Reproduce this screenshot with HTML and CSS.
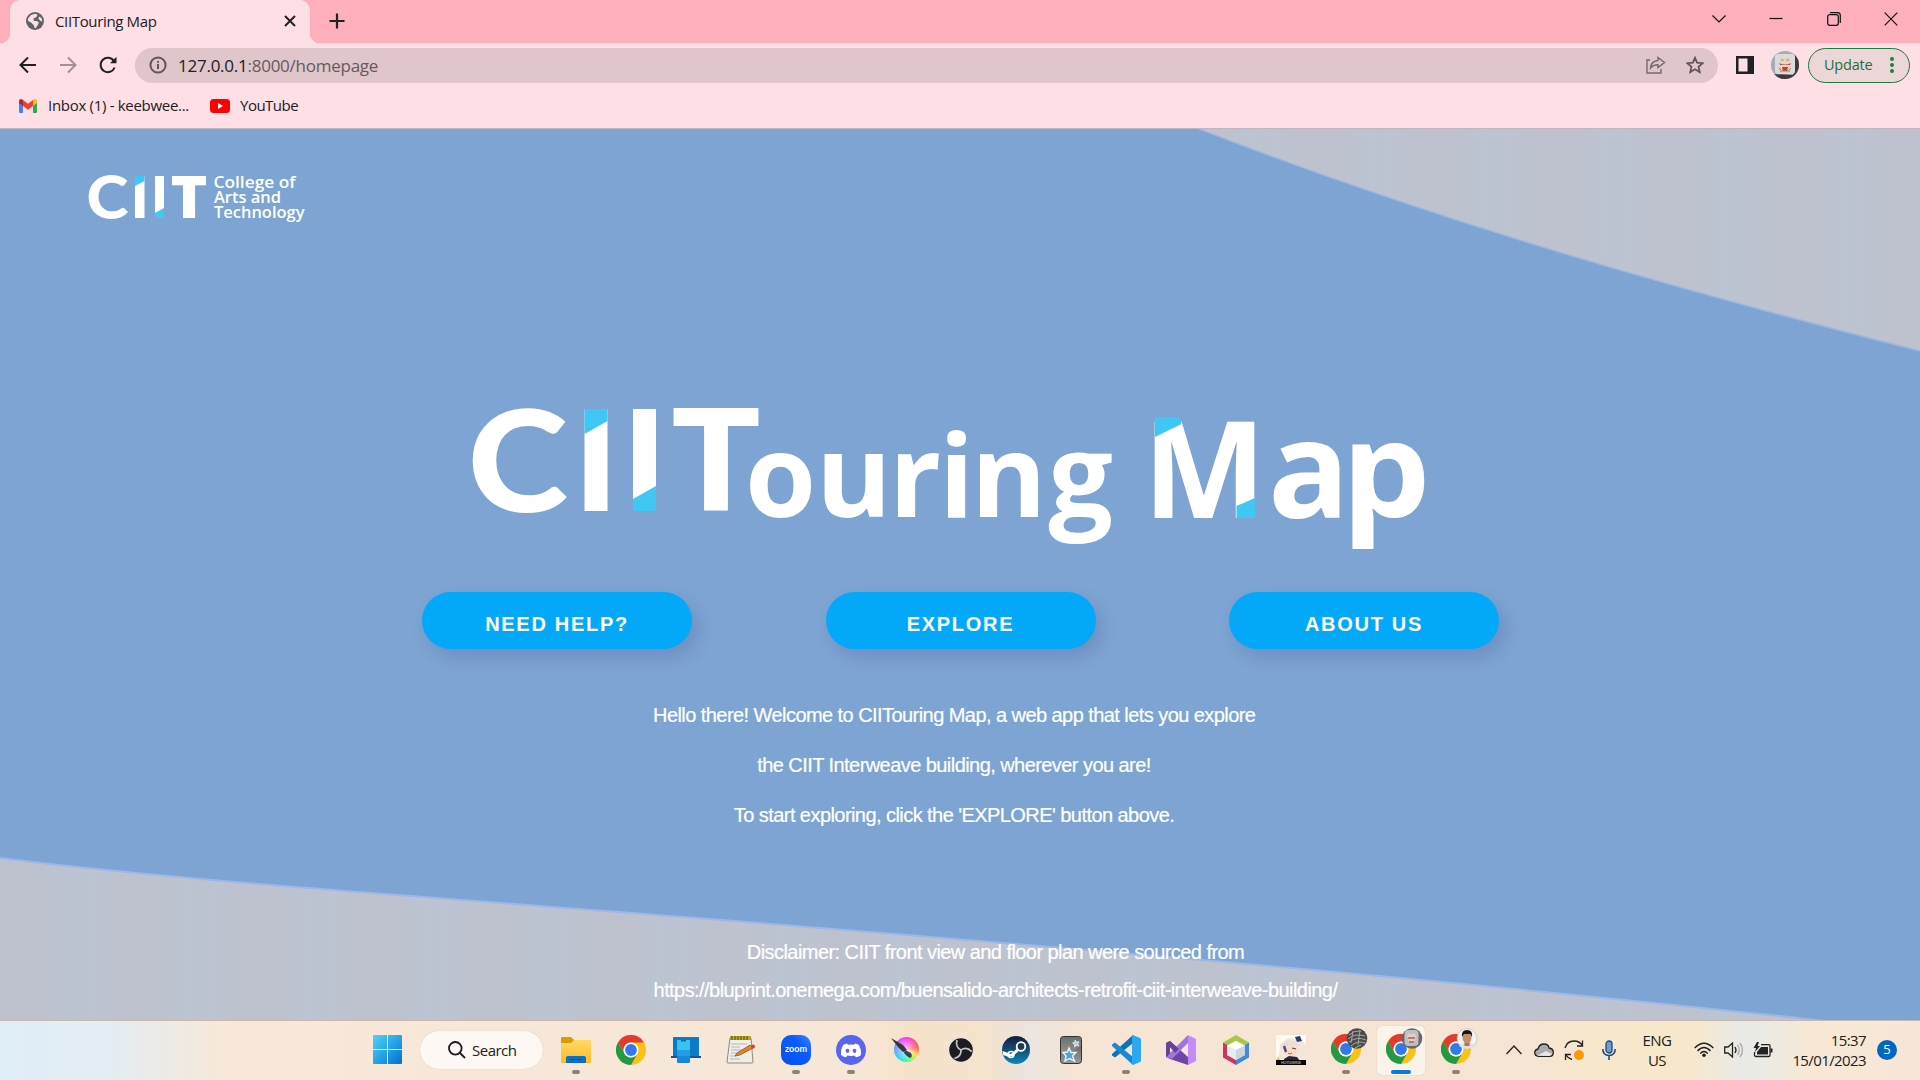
FILE: index.html
```html
<!DOCTYPE html>
<html lang="en">
<head>
<meta charset="utf-8">
<title>CIITouring Map</title>
<link rel="stylesheet" href="styles.css">
</head>
<body>
<svg class="defs" width="0" height="0">
  <defs>
    <linearGradient id="win" x1="0" y1="0" x2="1" y2="1"><stop offset="0" stop-color="#4fd6fb"/><stop offset="1" stop-color="#0070d0"/></linearGradient>
    <linearGradient id="fold" x1="0" y1="0" x2="0" y2="1"><stop offset="0" stop-color="#ffd968"/><stop offset="1" stop-color="#fdbb25"/></linearGradient>
    <linearGradient id="steam" x1="0" y1="0" x2="0" y2="1"><stop offset="0" stop-color="#131b39"/><stop offset="1" stop-color="#0e86b8"/></linearGradient>
    <linearGradient id="zoomg" x1="1" y1="0" x2="0" y2="1"><stop offset="0" stop-color="#3b86ff"/><stop offset=".35" stop-color="#0b5cff"/><stop offset="1" stop-color="#0650ec"/></linearGradient>
    <linearGradient id="grey" x1="0" y1="0" x2="0" y2="1"><stop offset="0" stop-color="#555"/><stop offset="1" stop-color="#999"/></linearGradient>
    <linearGradient id="stripes" gradientUnits="userSpaceOnUse" x1="0" y1="0" x2="118" y2="0" spreadMethod="repeat"><stop offset="0" stop-color="#bec2cf"/><stop offset=".4" stop-color="#bec2cf"/><stop offset=".6" stop-color="#bbc4d2"/><stop offset=".8" stop-color="#bcc3d1"/><stop offset="1" stop-color="#bec2cf"/></linearGradient>
    <symbol id="chrome" viewBox="0 0 30 30">
      <circle cx="15" cy="15" r="15" fill="#fbc116"/>
      <path d="M2 7.500A15 15 0 0 1 28 7.500L15 7.500A7.500 7.500 0 0 0 8.500 18.700Z" fill="#e33b2e"/>
      <path d="M2 7.500A15 15 0 0 0 15 30L21.500 18.750A7.500 7.500 0 0 1 8.500 18.750Z" fill="#229a45"/>
      <circle cx="15" cy="15" r="7.500" fill="#fff"/><circle cx="15" cy="15" r="5.900" fill="#3079ee"/>
    </symbol>
  </defs>
</svg>

<header class="browser">
  <div class="tabstrip">
    <div class="tab">
      <svg class="globe" width="18" height="18" viewBox="0 0 18 18"><circle cx="9" cy="9" r="9" fill="#5f6368"/><path d="M2 6.500L5 3 9 1.800 11.500 2.500 10.500 5 7.500 6.500 8 9H11L13 10.500 11.500 13.500 9.500 16.300C8 16 8.500 14 7.500 13L5 10.500 2 9Z" fill="#fedfe5"/><path d="M13 4.500L15.500 6 16.400 9.500 14.500 9 12.500 7Z" fill="#fedfe5"/></svg>
      <span class="tab-title">CIITouring Map</span>
      <svg class="tab-close" width="12" height="12" viewBox="0 0 12 12" stroke="#202124" stroke-width="2"><path d="M1 1L11 11M11 1L1 11"/></svg>
    </div>
    <svg class="newtab" width="16" height="16" viewBox="0 0 16 16" stroke="#202124" stroke-width="2.200"><path d="M8 .500V15.500M.500 8H15.500"/></svg>
    <div class="window-buttons">
      <svg width="14" height="14" viewBox="0 0 14 14"><path d="M.500 3.500L7 10 13.500 3.500"/></svg>
      <svg width="14" height="14" viewBox="0 0 14 14"><path d="M.500 6.500H13.500"/></svg>
      <svg width="14" height="14" viewBox="0 0 14 14"><rect x=".700" y="2.700" width="10.600" height="10.600" rx="2"/><path d="M3 .700H10.500Q13.300 .700 13.300 3.500V11"/></svg>
      <svg width="14" height="14" viewBox="0 0 14 14"><path d="M.700 .700L13.300 13.300M13.300 .700L.700 13.300"/></svg>
    </div>
  </div>

  <div class="toolbar">
    <div class="nav">
      <svg width="18" height="18" viewBox="0 0 18 18"><path d="M17 9H2M9 1.500L1.500 9 9 16.500"/></svg>
      <svg class="dim" width="18" height="18" viewBox="0 0 18 18"><path d="M1 9H16M9 1.500L16.500 9 9 16.500"/></svg>
      <svg width="18" height="18" viewBox="0 0 18 18"><path d="M15.600 11.500A7.200 7.200 0 1 1 15 5.200"/><path d="M17.500 .800V7.300H11Z" fill="#202124" stroke="none"/></svg>
    </div>
    <div class="address">
      <svg width="18" height="18" viewBox="0 0 18 18" fill="none" stroke="#5f5458" stroke-width="2"><circle cx="9" cy="9" r="7.600"/><path d="M9 8V13M9 5V6.800"/></svg>
      <span class="url"><b>127.0.0.1</b>:8000/homepage</span>
      <svg class="share" width="20" height="18" viewBox="0 0 20 18" fill="none" stroke="#75696d" stroke-width="1.400"><path d="M4 4H1V17H15V13"/><path d="M12 1.500L18.500 6.500 12 11.500V8.700C8.500 8.700 6.500 9.500 4.500 12 5 7.500 8 4.800 12 4.500Z"/></svg>
      <svg class="star" width="18" height="18" viewBox="0 0 18 18" fill="none" stroke="#5f5458" stroke-width="1.700"><path d="M9 1.800L11.100 6.700 16.700 7.200 12.500 10.800 13.800 16.200 9 13.300 4.200 16.200 5.500 10.800 1.300 7.200 6.900 6.700Z"/></svg>
    </div>
    <svg class="panel" width="18" height="18" viewBox="0 0 18 18"><rect width="18" height="18" fill="#202124"/><rect x="2.500" y="2.500" width="9" height="13" fill="#fedfe5"/></svg>
    <svg class="avatar" width="28" height="28" viewBox="0 0 28 28"><clipPath id="av"><circle cx="14" cy="14" r="14"/></clipPath><g clip-path="url(#av)"><rect width="28" height="28" fill="#a4adb3"/><path d="M24 0H28V28H0V23L22 24Z" fill="#44363c"/><rect x="4" y="3" width="20" height="20" rx="3" fill="#d8dcdf"/><path d="M8 9L9 5 12 7H16L19 5 20 9 19.500 13 21 17 18 22H10L7 17 8.500 13Z" fill="#e6d5c6"/><path d="M8 12Q14 15 20 12L19 14H9Z" fill="#bb4b45"/><path d="M11 16H17L16 20H12Z" fill="#c93c38"/><path d="M10 9H12.500M15.500 9H18M9 20H19M8 17L10 19M20 17L18 19" stroke="#9d7c57"/></g></svg>
    <div class="update"><span>Update</span><i></i></div>
  </div>

  <div class="bookmarks">
    <svg width="18" height="14" viewBox="0 0 18 14"><path d="M0 2V13Q0 14 1 14H4V5Z" fill="#4285f4"/><path d="M18 2V13Q18 14 17 14H14V5Z" fill="#34a853"/><path d="M0 2Q0 0 2 0L4 1V7L0 4Z" fill="#c5221f"/><path d="M18 2Q18 0 16 0L14 1V7L18 4Z" fill="#fbbc04"/><path d="M4 1L9 4.800 14 1V7L9 10.800 4 7Z" fill="#ea4335"/></svg>
    <span class="bm-inbox">Inbox (1) - keebwee...</span>
    <svg class="yt" width="20" height="14" viewBox="0 0 20 14"><rect width="20" height="14" rx="3.500" fill="#f00"/><path d="M8 4V10L13 7Z" fill="#fff"/></svg>
    <span class="bm-yt">YouTube</span>
  </div>
</header>

<main class="page">
  <svg class="backdrop" width="1920" height="891" viewBox="0 129 1920 891">
    <rect y="129" width="1920" height="891" fill="#7da4d3"/>
    <path d="M1194 127C1420 215 1650 283 1924 352V120Z" fill="url(#stripes)" stroke="#9fb5da" stroke-width="1.500"/>
    <path d="M-4 857.500C180 881 420 896 735 921C1100 950 1500 985 1834 1022V1030H-4Z" fill="url(#stripes)" stroke="#9bb9e6" stroke-width="2"/>
  </svg>

  <svg class="brand" width="220" height="50" viewBox="87 173 220 50">
    <g fill="#fff" font-family="Lato, sans-serif" font-weight="900">
      <text x="86.500" y="219" font-size="60" textLength="42" lengthAdjust="spacingAndGlyphs">C</text>
    </g>
    <path d="M135 176H144.500V218H135ZM155 176H164V218H155Z" fill="#fff"/>
    <path d="M135 176H144.500V181L135 186ZM155 213L164 208V218H155Z" fill="#41c7f4"/>
    <text x="170.500" y="218" font-size="58.500" font-family="Open Sans, sans-serif" font-weight="800" fill="#fff" textLength="37" lengthAdjust="spacingAndGlyphs">T</text>
    <g fill="#fff" font-family="Open Sans, sans-serif" font-size="15.500" font-weight="600">
      <text x="213.500" y="188" textLength="82" lengthAdjust="spacingAndGlyphs">College of</text>
      <text x="214" y="203" textLength="67" lengthAdjust="spacingAndGlyphs">Arts and</text>
      <text x="214" y="218" textLength="90.500" lengthAdjust="spacingAndGlyphs">Technology</text>
    </g>
  </svg>

  <svg class="headline" width="980" height="160" viewBox="460 395 980 160">
    <g fill="#fff" font-family="Open Sans, sans-serif" font-weight="700">
      <text x="467.500" y="511.500" font-size="142" font-family="Lato, sans-serif" font-weight="900" textLength="100.500" lengthAdjust="spacingAndGlyphs">C</text>
      <text x="670.500" y="511" font-size="143" textLength="91" lengthAdjust="spacingAndGlyphs">T</text>
      <text y="516.700" font-size="115" x="745 816 889 939 971">ourin</text>
      <text x="1048.500" y="516" font-size="114">g</text>
      <text x="1143" y="517.700" font-size="135" textLength="123" lengthAdjust="spacingAndGlyphs">M</text>
      <text x="1268" y="517.700" font-size="135">a</text>
      <text x="1341.500" y="516.700" font-size="133" textLength="89" lengthAdjust="spacingAndGlyphs">p</text>
    </g>
    <path d="M584.500 409H607.500V511H584.500ZM633 409H656V511H633Z" fill="#fff"/>
    <path d="M584.500 409H607.500V421L584.500 434ZM633 499L656 486V511H633Z" fill="#41c7f4"/>
    <path d="M1155 417H1179.500L1181.500 424 1155 437ZM1236.500 506L1255 498V518H1236.500Z" fill="#41c7f4"/>
  </svg>

  <nav class="actions">
    <a class="button">NEED HELP?</a>
    <a class="button">EXPLORE</a>
    <a class="button">ABOUT US</a>
  </nav>

  <div class="intro">
    <p>Hello there! Welcome to CIITouring Map, a web app that lets you explore</p>
    <p>the CIIT Interweave building, wherever you are!</p>
    <p>To start exploring, click the 'EXPLORE' button above.</p>
  </div>
  <div class="disclaimer">
    <p>Disclaimer: CIIT front view and floor plan were sourced from</p>
    <p>https://bluprint.onemega.com/buensalido-architects-retrofit-ciit-interweave-building/</p>
  </div>
</main>

<footer class="taskbar">
  <svg class="start" width="29" height="29" viewBox="0 0 29 29" fill="url(#win)"><path d="M1 0H14V14H0V1Q0 0 1 0ZM15 0H28Q29 0 29 1V14H15ZM0 15H14V29H1Q0 29 0 28ZM15 15H29V28Q29 29 28 29H15Z"/></svg>
  <div class="search">
    <svg width="18" height="18" viewBox="0 0 18 18" fill="none" stroke="#1c1c1c" stroke-width="1.800"><circle cx="7.300" cy="7.300" r="6.300"/><path d="M12 12L17 17"/></svg>
    <span>Search</span>
  </div>
  <div class="apps">
    <div class="app open"><svg width="30" height="30" viewBox="0 0 30 30"><path d="M0 3Q0 2 1 2H10L13 5V9H0Z" fill="#dc9a06"/><path d="M0 8H10L13 5H29Q30 5 30 6V27Q30 28 29 28H1Q0 28 0 27Z" fill="url(#fold)"/><path d="M5 28V23Q5 21 7 21H23Q25 21 25 23V28Z" fill="#0b6fc7"/><path d="M9 24.500H21" stroke="#064b95"/></svg></div>
    <div class="app"><svg width="30" height="30"><use href="#chrome"/></svg></div>
    <div class="app"><svg width="30" height="30" viewBox="0 0 30 30"><rect x="2" y="2" width="26" height="20" rx="1" fill="#0d79cb"/><path d="M0 21H30V23H0Z" fill="#075a9f"/><rect x="6" y="5" width="13" height="23" rx="1" fill="#1787d7"/><path d="M6 6Q6 5 7 5H18Q19 5 19 6V15H6Z" fill="#35c3f3"/><rect x="6" y="15" width="13" height="6" fill="#229ce4"/><rect x="10" y="5" width="5" height="1.500" fill="#096aae"/></svg></div>
    <div class="app"><svg width="30" height="30" viewBox="0 0 30 30"><path d="M4 3H25L27 27Q27 28 26 28H2Q1 28 1 27Z" fill="#eeedea" stroke="#8c8982"/><path d="M4 1H25V5H4Z" fill="#b9a621"/><path d="M6 1V5M9 1V5M12 1V5M15 1V5M18 1V5M21 1V5" stroke="#55500d"/><path d="M5 9H21M5 12H14M5 15H20M5 18H11M4 21H10M4 24H14" stroke="#b7b7b7"/><path d="M11 18L24 10 27 13 14 20 9 21Z" fill="#dd8528" stroke="#91501a" stroke-width=".800"/><circle cx="27" cy="11.500" r="2" fill="#e23b3b"/></svg></div>
    <div class="app open"><svg width="30" height="30" viewBox="0 0 30 30"><rect width="30" height="30" rx="10" fill="url(#zoomg)"/><text x="4" y="17" font-family="Lato, sans-serif" font-weight="700" font-size="9" fill="#fff" textLength="22" lengthAdjust="spacingAndGlyphs">zoom</text></svg></div>
    <div class="app open"><svg width="30" height="30" viewBox="0 0 30 30"><circle cx="15" cy="15" r="15" fill="#5964ef"/><path d="M11 8.500L12 9.800Q15 9.200 18 9.800L19 8.500Q22 9 23 10 25.500 14.500 25 20 23 22 20 22.300L18.500 20.500Q15 21.300 11.500 20.500L10 22.300Q7 22 5 20 4.500 14.500 7 10 8.500 9 11 8.500Z" fill="#fff"/><ellipse cx="11.500" cy="15.800" rx="1.900" ry="2.100" fill="#5964ef"/><ellipse cx="18.500" cy="15.800" rx="1.900" ry="2.100" fill="#5964ef"/></svg></div>
    <div class="app"><div class="krita"><svg width="30" height="30" viewBox="0 0 30 30"><path d="M1 3L13 10 17 15 13 17 8 12Z" fill="#39363b"/><path d="M15 15L21 18Q23 22 20 23 17 22 14 18Z" fill="#38415d"/></svg></div></div>
    <div class="app"><svg width="30" height="30" viewBox="0 0 30 30"><circle cx="15" cy="15" r="12.500" fill="#1d1c20" stroke="#e8e4e0" stroke-width="1.400"/><g fill="none" stroke="#c7c7ca" stroke-width="1.700"><path d="M15 15Q9 12 11 5"/><path d="M15 15Q9 12 11 5" transform="rotate(120 15 15)"/><path d="M15 15Q9 12 11 5" transform="rotate(240 15 15)"/></g></svg></div>
    <div class="app"><svg width="30" height="30" viewBox="0 0 30 30"><circle cx="15" cy="15" r="14" fill="url(#steam)"/><path d="M1.500 16L10 19 15.500 14 20 14 12 21 8 22 2 20Z" fill="#fff"/><circle cx="20" cy="11.500" r="4.300" fill="#24395a" stroke="#fff" stroke-width="1.800"/><circle cx="10" cy="19.500" r="3" fill="none" stroke="#fff" stroke-width="1.500"/></svg></div>
    <div class="app"><svg width="30" height="30" viewBox="0 0 30 30"><rect x="4.500" y="1.500" width="21" height="27" rx="3" fill="url(#grey)" stroke="#333"/><path d="M5 18Q18 17 25 10V4Q25 2 23 2H7Q5 2 5 4Z" fill="#fff" opacity=".150"/><path d="M13 13L15 17.500 20 17.500 16.500 21 18.500 26 13.500 23.500 9 26 10 21 7 17.500 11.500 17Z" fill="#4ba3e0" stroke="#e8f6ff" stroke-width="1.400"/><path d="M19 5L20.500 7 23 6.800 21.800 9 23 11 20.500 10.500 18.500 12 18.500 9.500 16.500 8 18.800 7.300Z" fill="#a5d6f5" stroke="#fff" stroke-width=".600"/></svg></div>
    <div class="app open"><svg width="30" height="30" viewBox="0 0 30 30"><path d="M22 0L22 8 4 22.500 1 20.500V19Z" fill="#0d72b9"/><path d="M1 9.500L4 7.500 22 22V30L1 11Z" fill="#178bd1"/><path d="M22 0L29 3Q30 3.500 30 5V25Q30 26.500 29 27L22 30 21 29V1Z" fill="#2ca8ef"/></svg></div>
    <div class="app"><svg width="30" height="30" viewBox="0 0 30 30"><path d="M0 8L4 6 22 22V30L4 24 0 22Z" fill="#7045a6"/><path d="M4 10V20L0 22V8Z" fill="#51307f"/><path d="M4 12L9 16 4 19Z" fill="#f6e6d7"/><path d="M22 8L6 24 0 22 22 0Z" fill="#a175dd"/><path d="M22 0L30 4V26L22 30Z" fill="#c28cf7"/><path d="M0 8L4 6 13 14 9 18 4 12V18L0 22Z" fill="#68409c"/><path d="M22 9V21L15 15Z" fill="#f6e6d7"/></svg></div>
    <div class="app"><svg width="30" height="30" viewBox="0 0 30 30"><path d="M15 0L28 7.500 24 11 15 6 6 11 2 7.500Z" fill="#aac748"/><path d="M2 7.500L6 10V20L15 25V30L2 22.500Z" fill="#cc3563"/><path d="M28 7.500L24 10V20L15 25V30L28 22.500Z" fill="#4489da"/><path d="M15 6L24 10.500 15 15 6 10.500Z" fill="#fff"/><path d="M6 10.500L15 15V25L6 20Z" fill="#e7ecef"/><path d="M24 10.500L15 15V25L24 20Z" fill="#ccd6e0"/></svg></div>
    <div class="app"><svg width="30" height="30" viewBox="0 0 30 30"><rect width="30" height="30" fill="#f3e6da"/><path d="M0 0H30V10L26 5 12 3 4 9 3 20 0 24Z" fill="#fffaf4"/><path d="M7 9Q14 4 22 10V17Q16 24 9 19Z" fill="#fbdcc8"/><path d="M5 10L12 5 20 7 25 12 17 9 8 12Z" fill="#e6dedb"/><path d="M8 11L10 17" stroke="#4a4d87" stroke-width="2.500"/><path d="M16 13L20 14" stroke="#51404c"/><path d="M12 18Q14 20 16 18" stroke="#ba6259" fill="none"/><path d="M19 2L24 1 26 6 21 7Z" fill="#283e79"/><path d="M8 24L13 21 21 22 24 26H8Z" fill="#252444"/><path d="M2 22L5 26H0Z" fill="#e9c53f"/><rect y="25" width="30" height="5" fill="#070707"/><text x="5" y="29" font-size="3.500" font-family="Lato, sans-serif" fill="#ddd" textLength="20">HOYOVERSE</text></svg></div>
    <div class="app open"><svg class="over" width="37" height="37" viewBox="0 0 37 37"><use href="#chrome" y="6" width="30" height="30"/><circle cx="26" cy="10.500" r="10.300" fill="#4b4b4b"/><path d="M18 7Q23 2 30 3M17 11Q23 5 34 8M18 14Q26 8 35 12M20 18Q26 12 34 15M24 20L30 17M22 3L20 15M29 2L27 17" stroke="#a6a6a6" fill="none"/></svg></div>
    <div class="app open active"><svg class="over" width="37" height="37" viewBox="0 0 37 37"><use href="#chrome" y="6" width="30" height="30"/><circle cx="26" cy="10.500" r="10.300" fill="#68686b"/><rect x="18.500" y="2" width="14" height="16" rx="4" fill="#bdc0c2"/><path d="M21 8L22 5 24 6H27L29 5 30 9 28 15H23Z" fill="#e5cdc3"/><path d="M22 10H29M23 14H28" stroke="#a65d59" stroke-width="1.500"/></svg></div>
    <div class="app open"><svg class="over" width="37" height="37" viewBox="0 0 37 37"><use href="#chrome" y="6" width="30" height="30"/><circle cx="26" cy="10.500" r="10" fill="#f3f3f3" stroke="#b9b9b9" stroke-width=".600"/><path d="M18 18Q20 15 24 15H28Q32 15 34 18Q26 24 18 18Z" fill="#dfe0e4"/><rect x="23.500" y="13" width="5" height="5" fill="#ab7056"/><ellipse cx="26" cy="9.500" rx="4.500" ry="6" fill="#c58b6d"/><path d="M21 9Q20 2 26 2T31 9L29.500 6H23Z" fill="#171717"/></svg></div>
  </div>
  <div class="tray">
    <svg class="chev" width="16" height="10" viewBox="0 0 16 10"><path d="M.500 9L8 1 15.500 9"/></svg>
    <svg class="cloud" width="20" height="14" viewBox="0 0 20 14"><path d="M4.500 13.300Q.700 13 .700 9.500 1 6.500 4 6 5.500 1 10 1T15 5Q19.300 5.500 19.300 9.500T15.500 13.300Z" fill="#aaa" stroke="#222"/><path d="M3 12.800L12 8 18 11 15.500 13Z" fill="#e7e7e7" stroke="none"/></svg>
    <svg class="sync" width="20" height="20" viewBox="0 0 20 20"><path d="M1 8Q3 1 10 1 16 1 18.500 6M18.500 .500V6H13M8 19.500Q4 18.500 1.500 14.500M1.500 20V14.500H7"/><circle cx="15" cy="15" r="5" fill="#ff9800" stroke="none"/></svg>
    <svg class="mic" width="14" height="20" viewBox="0 0 14 20"><rect x="4" y="1" width="6" height="12" rx="3" fill="#6d9ccf" stroke="#174c91"/><path d="M.800 9Q.800 15.500 7 15.500T13.200 9M7 15.500V20" stroke="#174c91" stroke-width="1.600"/></svg>
    <div class="lang"><span>ENG</span><span>US</span></div>
    <svg class="wifi" width="20" height="16" viewBox="0 0 20 16" stroke-width="1.500"><path d="M.700 6Q10-3.500 19.300 6M3.500 9Q10 2 16.500 9M6.300 11.500Q10 7.500 13.700 11.500"/><circle cx="10" cy="13.300" r="1.800" fill="#222" stroke="none"/></svg>
    <svg class="vol" width="20" height="16" viewBox="0 0 20 16"><path d="M.700 5H4L8.500 1V15L4 11H.700Z"/><path d="M11 5Q13 8 11 11"/><path d="M13.500 3Q17 8 13.500 13M16 1Q21 8 16 15" stroke="#aaa"/></svg>
    <svg class="batt" width="20" height="16" viewBox="0 0 20 16"><path d="M8 2.700H16Q17 2.700 17 4V13Q17 14.500 16 14.500H3Q1.500 14.500 1.500 13V10"/><path d="M18.500 6.500V10.500" stroke-width="2"/><path d="M8 5H15V12.500H4V10Z" fill="#222" stroke="none"/><path d="M4 0L.500 6H3L2 10 7 4H4.500L6 0Z" fill="#222" stroke="none"/></svg>
    <div class="clock"><span>15:37</span><span>15/01/2023</span></div>
    <div class="badge">5</div>
  </div>
</footer>
</body>
</html>
```

FILE: styles.css
```css
* { box-sizing: border-box; }
body {
  margin: 0;
  width: 1920px;
  height: 1080px;
  overflow: hidden;
  font-family: "Open Sans", sans-serif;
  color: #202124;
}
svg { display: block; flex: none; }
p { margin: 0; }
.defs { position: absolute; }

/* browser chrome */
.browser { height: 129px; background: #fedfe5; border-bottom: 1px solid #c2b5bd; font-size: 15px; white-space: nowrap; }
.tabstrip { display: flex; align-items: flex-start; height: 43px; padding-left: 10px; background: #ffaebc; }
.tab { position: relative; display: flex; align-items: center; width: 300px; height: 43px; padding: 0 14px 2px 16px; background: #fedfe5; border-radius: 10px 10px 0 0; }
.tab::before, .tab::after { content: ""; position: absolute; bottom: 0; width: 10px; height: 10px; }
.tab::before { left: -10px; background: radial-gradient(circle at 0 0, transparent 10px, #fedfe5 10.500px); }
.tab::after { right: -10px; background: radial-gradient(circle at 100% 0, transparent 10px, #fedfe5 10.500px); }
.tab-title { margin-left: 11px; letter-spacing: -0.350px; }
.tab-close { margin-left: auto; }
.newtab { margin: 13px 0 0 19px; }
.window-buttons { display: flex; gap: 43.500px; margin: 12px 22px 0 auto; fill: none; stroke: #111; stroke-width: 1.200; }
.toolbar { display: flex; align-items: center; height: 44px; padding: 0 10px 0 19px; }
.nav { display: flex; gap: 22px; margin-right: 18px; fill: none; stroke: #202124; stroke-width: 2; }
.nav .dim { stroke: #a48f95; }
.address { display: flex; align-items: center; width: 1583px; height: 35px; padding: 0 14px; border-radius: 18px; background: #e0c5ca; }
.url { margin-left: 11px; font-size: 17px; letter-spacing: -0.250px; color: #655a5e; }
.url b { font-weight: 400; color: #202124; }
.share { margin-left: auto; }
.star { margin-left: 20px; }
.panel { margin-left: 18px; }
.avatar { margin-left: 17px; }
.update { display: flex; align-items: center; justify-content: space-between; width: 102px; height: 35px; margin-left: 9px; padding: 0 14px 1px 15px; border: 1.500px solid #1c7a3c; border-radius: 18px; background: #ecd6d8; color: #1c703a; font-size: 14.500px; letter-spacing: -0.200px; }
.update i { width: 4px; height: 4px; margin-right: 1px; border-radius: 50%; background: #1c8040; box-shadow: 0 -6px #1c8040, 0 6px #1c8040; }
.bookmarks { display: flex; align-items: center; height: 38px; padding-left: 19px; }
.bookmarks span { position: relative; top: -1px; }
.bm-inbox { width: 142px; margin-left: 11px; letter-spacing: -0.300px; }
.yt { margin-left: 20px; }
.bm-yt { margin-left: 10px; letter-spacing: -0.500px; }

/* home page */
.page { position: relative; display: flex; flex-direction: column; align-items: center; height: 891px; overflow: hidden; font-family: "Liberation Sans", Arial, sans-serif; color: #fff; white-space: nowrap; }
.page > * { position: relative; flex: none; }
.page > .backdrop { position: absolute; top: 0; left: 0; }
.brand { align-self: flex-start; margin: 44px 0 0 87px; overflow: visible; }
.headline { margin: 172px 20px 0 0; overflow: visible; }
.actions { display: flex; gap: 133.500px; margin: 37px 0 0 1px; }
.button { width: 270px; height: 57px; padding-top: 5px; border-radius: 28.500px; background: #03a9f8; box-shadow: 6px 8px 15px rgba(80, 90, 150, .280); font-size: 20px; font-weight: 700; line-height: 54px; letter-spacing: 1.700px; text-align: center; }
.intro, .disclaimer { font-size: 20px; text-align: center; letter-spacing: -0.560px; -webkit-text-stroke: .200px #fff; }
.intro { width: 602px; margin: 41px 12px 0 0; line-height: 50px; }
.disclaimer { width: 686px; margin: 93px 0 0 71px; line-height: 38px; }

/* taskbar */
.taskbar { display: flex; align-items: center; height: 60px; padding-bottom: 2px; border-top: 1px solid #c9b6ae; background: linear-gradient(90deg, #e0eef8 0, #e4edf3 110px, #f7e8d9 220px, #f6e7d8 850px, #f6e2cb 910px, #f5e3cc 980px, #ebe4df 1030px, #f6e4d4 1080px, #f6e4d4 1530px, #f8e8cb 1600px, #f8e8cb 1690px, #e9eae6 1740px, #ebeae4 1765px, #f7e8d4 1810px, #f7e6d8 1920px); }
.start { margin-left: 373px; }
.search { display: flex; align-items: center; width: 123px; height: 38px; margin-left: 18px; padding-left: 28px; border-radius: 19px; background: #fdf8f3; box-shadow: 0 0 1px #c9b9aa; font-size: 15px; }
.search span { margin-left: 6px; letter-spacing: -0.500px; }
.apps { display: flex; margin-left: 5.500px; }
.app { position: relative; display: flex; align-items: center; justify-content: center; width: 55px; height: 58px; }
.app.open::after { content: ""; position: absolute; bottom: 5px; left: 23.500px; width: 8px; height: 4px; border-radius: 2px; background: #8c8279; }
.app.active::before { content: ""; position: absolute; inset: 5px 3.500px 4px; border-radius: 5px; background: #fbf2e9; box-shadow: 0 0 1px #c9b9aa; }
.app.active::after { left: 17.500px; width: 20px; background: #0a7ad8; }
.over { position: relative; margin: -6px -7px 0 0; }
.krita { width: 25px; height: 25px; border-radius: 50%; background: radial-gradient(circle, rgba(255, 255, 255, .700), transparent 70%), conic-gradient(#f3e, #f55 80deg, #fd4 120deg, #6f6 160deg, #2de 210deg, #69f 280deg, #c5f 320deg, #f3e); }
.krita svg { margin: -2px 0 0 -4px; }
.tray { display: flex; align-items: center; height: 58px; fill: none; stroke: #222; stroke-width: 1.300; font-size: 15px; color: #202020; }
.chev { margin-left: 22.500px; }
.cloud { margin-left: 12px; }
.sync { margin-left: 10px; }
.mic { margin-left: 18px; }
.lang { display: flex; flex-direction: column; align-items: center; width: 40px; margin-left: 21px; line-height: 20px; letter-spacing: -0.500px; }
.wifi { margin-left: 17px; }
.vol { margin-left: 10px; }
.batt { margin-left: 9px; }
.clock { display: flex; flex-direction: column; align-items: flex-end; width: 76px; margin-left: 17px; line-height: 20px; letter-spacing: -0.600px; }
.badge { width: 20px; height: 20px; margin-left: 11px; border-radius: 50%; background: #0067c0; color: #fff; font-size: 13px; line-height: 19px; text-align: center; }
```
